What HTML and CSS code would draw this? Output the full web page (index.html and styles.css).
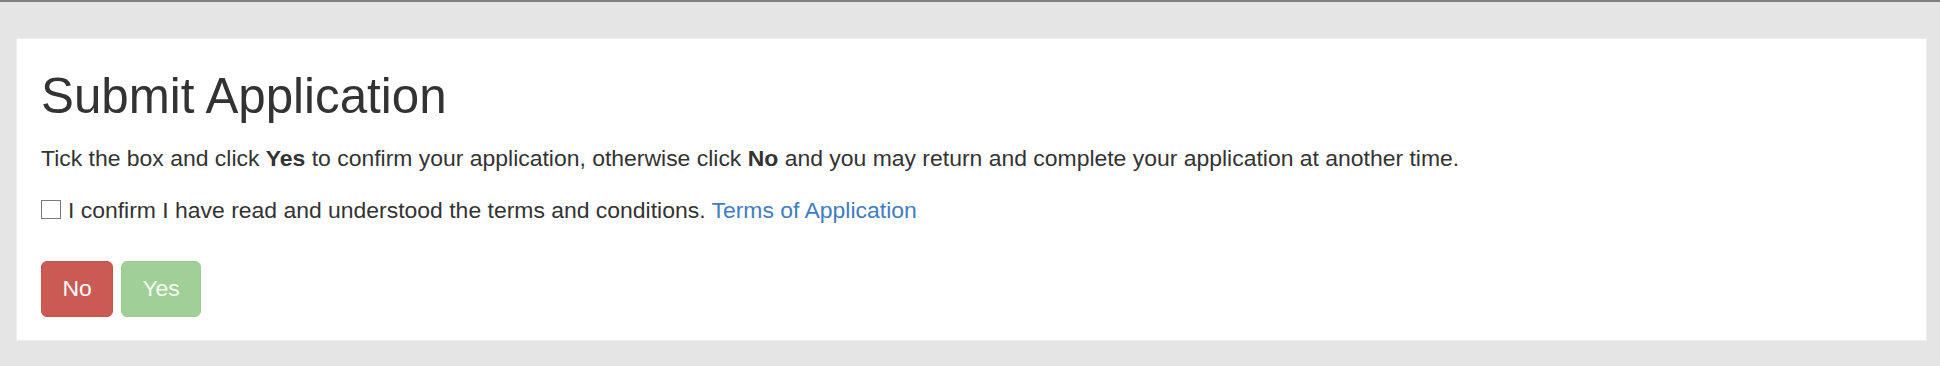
FILE: index.html
```html
<!DOCTYPE html>
<html lang="en">
<head>
    <meta charset="UTF-8">
    <meta name="viewport" content="width=device-width, initial-scale=1.0">
    <title>Submit Application</title>
    <link rel="stylesheet" href="styles.css">
</head>
<body>
    <div class="page">
        <!-- Panel principal -->
        <div class="panel">
            <h2 class="title">Submit Application</h2>
            <p class="intro">Tick the box and click <strong>Yes</strong> to confirm your application, otherwise click <strong>No</strong> and you may return and complete your application at another time.</p>

            <div class="confirm">
                <label>
                    <input type="checkbox" id="agree">I confirm I have read and understood the terms and conditions. <a href="#">Terms of Application</a>
                </label>
            </div>

            <div class="actions">
                <button type="button" class="btn btn-no">No</button>
                <button type="button" class="btn btn-yes" disabled>Yes</button>
            </div>
        </div>
    </div>
</body>
</html>
```
FILE: styles.css
```css
/* General */
body {
    margin: 0;
    padding: 0;
    font-family: "Liberation Sans", Arial, sans-serif;
    color: #333;
    background-color: #e5e5e5;
    border-top: 2px solid #7f7f7f;
}

.page {
    padding: 36px 13px 0 16px;
}

/* Panel */
.panel {
    background-color: #fff;
    border: 1px solid #eeeeee;
    padding: 30px 24px 23px 24px;
}

.title {
    margin: 0 0 19px 0;
    font-size: 49.3px;
    font-weight: normal;
    line-height: 53.6px;
    color: #333;
}

.intro {
    margin: 0 0 19.5px 0;
    font-size: 22.95px;
    line-height: 32.6px;
}

.confirm {
    margin-bottom: 34.4px;
    font-size: 22.95px;
    line-height: 32.6px;
}

.confirm input[type="checkbox"] {
    -webkit-appearance: none;
    appearance: none;
    display: inline-block;
    width: 20px;
    height: 19px;
    margin: 0 7px 0 0;
    border: 1px solid #7a7a7a;
    background-color: #fff;
    vertical-align: -1px;
    box-sizing: border-box;
}

.confirm a {
    color: #3f7dc0;
    text-decoration: none;
}

/* Buttons */
.actions {
    display: flex;
    gap: 7.6px;
}

.btn {
    font-family: "Liberation Sans", Arial, sans-serif;
    font-size: 22.95px;
    line-height: 32.6px;
    padding: 10.7px 20.5px;
    border: 1px solid transparent;
    border-radius: 6px;
    color: #fff;
    cursor: pointer;
}

.btn-no {
    background-color: #cb5a52;
    border-color: #c6534b;
}

.btn-yes {
    background-color: #a1cf98;
    border-color: #9bcb92;
    color: #f4fbf2;
    cursor: not-allowed;
}
```
